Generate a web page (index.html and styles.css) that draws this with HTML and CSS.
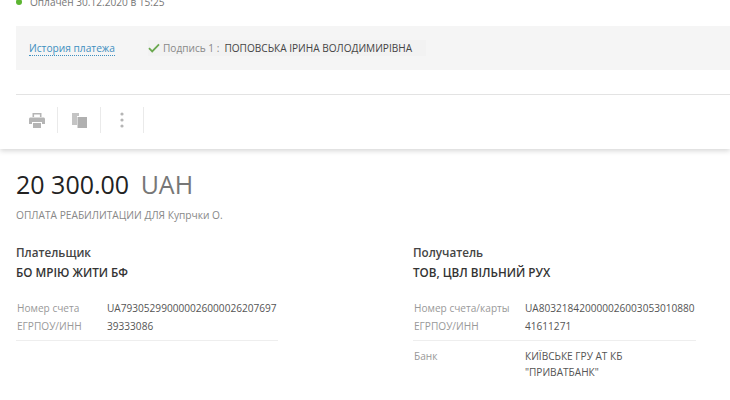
FILE: index.html
```html
<!DOCTYPE html>
<html lang="en">
<head>
    <meta charset="UTF-8">
    <meta name="viewport" content="width=device-width, initial-scale=1.0">
    <title>Платеж</title>
    <link rel="stylesheet" href="styles.css">
</head>
<body>
    <div class="top">
        <div class="status"><span class="dot"></span>Оплачен 30.12.2020 в 15:25</div>
        <div class="panel">
            <a class="history" href="#">История платежа</a>
            <div class="sign">
                <svg class="check" width="12" height="10" viewBox="0 0 12 10"><path d="M1 5.2 4.2 8.4 11 1.4" fill="none" stroke="#6aa84f" stroke-width="1.8"/></svg>
                <span class="sign-label">Подпись 1 :</span>
                <span class="sign-name">ПОПОВСЬКА ІРИНА ВОЛОДИМИРІВНА</span>
            </div>
        </div>
        <div class="toolbar">
            <div class="tool">
                <svg width="16" height="15" viewBox="0 0 16 15" fill="#b5b5b5"><path d="M3.5 0h9v4h-1.6V1.5H5.100V4H3.500z"/><path d="M1.500 4.500h13c.8 0 1.500.7 1.500 1.500v5h-3V9H3v2H0V6c0-.8.7-1.500 1.500-1.500z"/><path d="M4 10h8v5H4z"/></svg>
            </div>
            <div class="tool">
                <svg width="15" height="15" viewBox="0 0 15 15"><path d="M0 0h7v3H5v9H0z" fill="#c4c4c4"/><path d="M5.500 4H15v11H5.500z" fill="#b0b0b0"/></svg>
            </div>
            <div class="tool">
                <svg width="4" height="16" viewBox="0 0 4 16" fill="#b5b5b5"><circle cx="2" cy="2" r="1.600"/><circle cx="2" cy="8" r="1.600"/><circle cx="2" cy="14" r="1.600"/></svg>
            </div>
        </div>
    </div>

    <div class="details">
        <div class="amount">20 300.00 <span class="currency">UAH</span></div>
        <div class="purpose">ОПЛАТА РЕАБИЛИТАЦИИ ДЛЯ Купрчки О.</div>

        <div class="parties">
            <div class="party payer">
                <div class="party-title">Плательщик</div>
                <div class="party-name">БО МРІЮ ЖИТИ БФ</div>
                <div class="rows">
                    <div class="row"><span class="key">Номер счета</span><span>UA793052990000026000026207697</span></div>
                    <div class="row"><span class="key">ЕГРПОУ/ИНН</span><span>39333086</span></div>
                </div>
            </div>
            <div class="party receiver">
                <div class="party-title">Получатель</div>
                <div class="party-name">ТОВ, ЦВЛ ВІЛЬНИЙ РУХ</div>
                <div class="rows">
                    <div class="row"><span class="key">Номер счета/карты</span><span>UA803218420000026003053010880</span></div>
                    <div class="row"><span class="key">ЕГРПОУ/ИНН</span><span>41611271</span></div>
                </div>
                <div class="row bank"><span class="key">Банк</span><span>КИЇВСЬКЕ ГРУ АТ КБ<br>"ПРИВАТБАНК"</span></div>
            </div>
        </div>
    </div>
</body>
</html>
```

FILE: styles.css
```css
* {
    margin: 0;
    padding: 0;
    box-sizing: border-box;
    font-family: 'Open Sans', Arial, sans-serif;
}

html, body {
    height: 400px;
    overflow: hidden;
}

body {
    background-color: #fff;
    color: #333;
}

.top {
    height: 155px;
    padding-left: 16px;
    box-shadow: 0 2px 5px rgba(0, 0, 0, 0.16);
}

.status {
    display: flex;
    align-items: center;
    height: 16px;
    margin-top: -6px;
    font-size: 10.100px;
    color: #777;
}

.dot {
    width: 6px;
    height: 6px;
    margin-right: 8px;
    border-radius: 50%;
    background-color: #5cb531;
}

.panel {
    display: flex;
    align-items: center;
    height: 44px;
    margin-top: 16px;
    padding-left: 13px;
    background-color: #f5f5f5;
}

.history {
    font-size: 10.200px;
    line-height: 14px;
    color: #3d8fc0;
    text-decoration: none;
    border-bottom: 1px dotted #3d8fc0;
}

.sign {
    display: flex;
    align-items: center;
    height: 16px;
    margin-left: 33px;
    padding-right: 14px;
    background-color: #f2f2f2;
    font-size: 10.100px;
}

.check {
    margin-right: 3px;
}

.sign-label {
    color: #888;
    margin-right: 5px;
}

.sign-name {
    color: #444;
}

.toolbar {
    display: flex;
    margin-top: 24px;
    padding-top: 12px;
    border-top: 1px solid #e3e3e3;
}

.tool {
    display: flex;
    align-items: center;
    justify-content: center;
    width: 43px;
    height: 26px;
    border-right: 1px solid #eaeaea;
}

.tool:first-child {
    width: 42px;
}

.details {
    padding: 18px 0 0 16px;
}

.amount {
    font-size: 25px;
    line-height: 34px;
    color: #222;
}

.currency {
    margin-left: 5px;
    color: #777;
}

.purpose {
    margin-top: 7px;
    font-size: 10.200px;
    line-height: 14px;
    color: #888;
}

.parties {
    display: flex;
    margin-top: 20px;
}

.party-title, .party-name {
    font-size: 11.700px;
    line-height: 20px;
    font-weight: 600;
    color: #444;
}

.party-name {
    color: #333;
}

.rows {
    margin-top: 17px;
    padding-bottom: 5px;
    border-bottom: 1px solid #eee;
}

.row {
    display: flex;
    font-size: 10.100px;
    line-height: 18px;
    color: #555;
}

.key {
    flex-shrink: 0;
    color: #999;
}

.payer {
    width: 262px;
    margin-right: 135px;
}

.payer .key {
    width: 91px;
    padding-left: 1px;
}

.receiver {
    width: 283px;
}

.receiver .key {
    width: 112px;
    padding-left: 1px;
}

.bank {
    margin-top: 7px;
    line-height: 16px;
}
```
